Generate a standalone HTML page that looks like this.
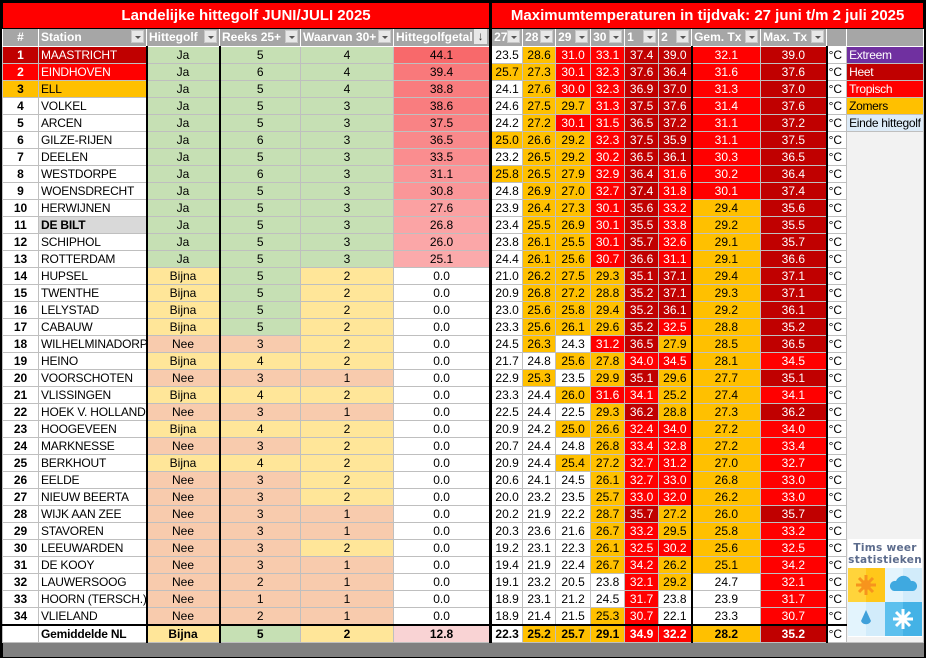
<!DOCTYPE html>
<html><head><meta charset="utf-8"><style>
html,body{margin:0;padding:0;background:#000;width:926px;height:658px;overflow:hidden}
table{position:absolute;left:2px;top:2px;width:921px;border-collapse:collapse;table-layout:fixed;font-family:"Liberation Sans",Arial,sans-serif;font-size:12px;color:#000}
td{border:1px solid #bfbfbf;padding:0;height:16px;line-height:15px;text-align:center;white-space:nowrap;overflow:hidden;background:#fff}
tr.t td{height:25px;background:#f00;color:#fff;font-weight:bold;font-size:15px;border:1px solid #000;border-bottom:1px solid #000}
tr.h td{height:17px;background:#a6a6a6;color:#fff;font-weight:bold;text-align:left;padding-left:2px;position:relative;border-color:#fff}
tr.h td b{position:absolute;right:2px;top:1px;width:13px;height:13px;background:#e8e8e8;border:1px solid #c8c8c8;box-sizing:border-box}
tr.h td b:after{content:"";position:absolute;left:3px;top:5px;border-left:3px solid transparent;border-right:3px solid transparent;border-top:3px solid #555}
td.n{font-weight:bold}
td.s{text-align:left;padding-left:2px;border-right:2px solid #000;letter-spacing:-0.2px}
td.L{border-left:2px solid #000}
td.ja{background:#c6e0b4}td.bi{background:#ffe699}td.ne{background:#f8cbad}
td.w{background:#fff}td.o{background:#ffc000}td.r{background:#f00;color:#fff}td.d{background:#c00000;color:#fff}
td.p{border-right:3px solid #000}
td.c{text-align:left;padding-left:1px}
td.lg{text-align:left;padding-left:2px;border-left:1px solid #bfbfbf;letter-spacing:-0.3px}
tr.avg td{font-weight:bold;border-top:2px solid #000;height:16px}
tr.bar td{height:14px;background:#808080;border:none}
</style></head><body>
<table>
<colgroup><col style="width:36px"><col style="width:108px"><col style="width:73px"><col style="width:81px"><col style="width:93px"><col style="width:97px"><col style="width:32px"><col style="width:33px"><col style="width:35px"><col style="width:34px"><col style="width:34px"><col style="width:33px"><col style="width:69px"><col style="width:66px"><col style="width:20px"><col style="width:77px"></colgroup>
<tr class="t"><td colspan="6" style="border-right:3px solid #000">Landelijke hittegolf JUNI/JULI 2025</td><td colspan="10">Maximumtemperaturen in tijdvak: 27 juni t/m 2 juli 2025</td></tr>
<tr class="h"><td style="text-align:center;padding:0">#</td><td>Station<b></b></td><td>Hittegolf<b></b></td><td>Reeks 25+<b></b></td><td>Waarvan 30+<b></b></td><td style="border-right:3px solid #000">Hittegolfgetal<span style="position:absolute;right:2px;top:0;width:13px;height:15px;background:#e8e8e8;color:#333;font-weight:normal;text-align:center">&#8595;</span></td><td>27<b></b></td><td>28<b></b></td><td>29<b></b></td><td>30<b></b></td><td>1<b></b></td><td>2<b></b></td><td>Gem. Tx<b></b></td><td>Max. Tx<b></b></td><td></td><td></td></tr>
<tr><td class="n d">1</td><td class="s d">MAASTRICHT</td><td class="ja">Ja</td><td class="ja L">5</td><td class="ja">4</td><td class="p" style="background:#f8696b">44.1</td><td class="w">23.5</td><td class="o">28.6</td><td class="r">31.0</td><td class="r">33.1</td><td class="d">37.4</td><td class="d">39.0</td><td class="r L">32.1</td><td class="d">39.0</td><td class="c L">°C</td><td class="lg" style="background:#7030a0;color:#fff">Extreem</td></tr>
<tr><td class="n r">2</td><td class="s r">EINDHOVEN</td><td class="ja">Ja</td><td class="ja L">6</td><td class="ja">4</td><td class="p" style="background:#f9797b">39.4</td><td class="o">25.7</td><td class="o">27.3</td><td class="r">30.1</td><td class="r">32.3</td><td class="d">37.6</td><td class="d">36.4</td><td class="r L">31.6</td><td class="d">37.6</td><td class="c L">°C</td><td class="lg" style="background:#c00000;color:#fff">Heet</td></tr>
<tr><td class="n o">3</td><td class="s o">ELL</td><td class="ja">Ja</td><td class="ja L">5</td><td class="ja">4</td><td class="p" style="background:#f97c7e">38.8</td><td class="w">24.1</td><td class="o">27.6</td><td class="r">30.0</td><td class="r">32.3</td><td class="d">36.9</td><td class="d">37.0</td><td class="r L">31.3</td><td class="d">37.0</td><td class="c L">°C</td><td class="lg" style="background:#f00;color:#fff">Tropisch</td></tr>
<tr><td class="n">4</td><td class="s">VOLKEL</td><td class="ja">Ja</td><td class="ja L">5</td><td class="ja">3</td><td class="p" style="background:#f97d7f">38.6</td><td class="w">24.6</td><td class="o">27.5</td><td class="o">29.7</td><td class="r">31.3</td><td class="d">37.5</td><td class="d">37.6</td><td class="r L">31.4</td><td class="d">37.6</td><td class="c L">°C</td><td class="lg" style="background:#ffc000">Zomers</td></tr>
<tr><td class="n">5</td><td class="s">ARCEN</td><td class="ja">Ja</td><td class="ja L">5</td><td class="ja">3</td><td class="p" style="background:#f98385">37.5</td><td class="w">24.2</td><td class="o">27.2</td><td class="r">30.1</td><td class="r">31.5</td><td class="d">36.5</td><td class="d">37.2</td><td class="r L">31.1</td><td class="d">37.2</td><td class="c L">°C</td><td class="lg" style="background:#ddebf7">Einde hittegolf</td></tr>
<tr><td class="n">6</td><td class="s">GILZE-RIJEN</td><td class="ja">Ja</td><td class="ja L">6</td><td class="ja">3</td><td class="p" style="background:#f9898b">36.5</td><td class="o">25.0</td><td class="o">26.6</td><td class="o">29.2</td><td class="r">32.3</td><td class="d">37.5</td><td class="d">35.9</td><td class="r L">31.1</td><td class="d">37.5</td><td class="c L">°C</td><td rowspan="30" style="background:#f2f2f2;position:relative;vertical-align:top;border-left:1px solid #bfbfbf">
<div style="position:absolute;left:1px;top:407px;width:74px;height:98px;background:#fff">
<div style="font-family:'DejaVu Sans',sans-serif;font-size:10.5px;line-height:12px;color:#5b6b8c;text-align:center;font-weight:bold;letter-spacing:0.3px;margin-top:3px">Tims weer<br>statistieken</div>
<svg width="74" height="68" viewBox="0 0 74 68" style="position:absolute;left:0;top:29px">
<rect x="0" y="0" width="37" height="34" fill="#ffd43b"/><rect x="18" y="0" width="19" height="34" fill="#ffc71a"/>
<rect x="37" y="0" width="37" height="34" fill="#e3f4fd"/><rect x="55" y="0" width="19" height="34" fill="#d2ecfb"/>
<rect x="0" y="34" width="37" height="34" fill="#e3f4fd"/><rect x="18" y="34" width="19" height="34" fill="#d2ecfb"/>
<rect x="37" y="34" width="37" height="34" fill="#5cc0ee"/><rect x="55" y="34" width="19" height="34" fill="#44b2e6"/>
<g stroke="#f7941d" stroke-width="3"><line x1="18" y1="7" x2="18" y2="27"/><line x1="8" y1="17" x2="28" y2="17"/><line x1="11" y1="10" x2="25" y2="24"/><line x1="25" y1="10" x2="11" y2="24"/></g><circle cx="18" cy="17" r="5" fill="#f7941d"/>
<path d="M46 23 a5 5 0 0 1 2 -10 a8 8 0 0 1 15 0 a5 5 0 0 1 2 10 z" fill="#3fa9e0"/>
<path d="M18 42 L13 53 a5.5 5.5 0 0 0 10 0 z" fill="#3fa0da"/>
<g stroke="#fff" stroke-width="3"><line x1="55" y1="41" x2="55" y2="61"/><line x1="45" y1="51" x2="65" y2="51"/><line x1="48" y1="44" x2="62" y2="58"/><line x1="62" y1="44" x2="48" y2="58"/></g>
</svg></div></td></tr>
<tr><td class="n">7</td><td class="s">DEELEN</td><td class="ja">Ja</td><td class="ja L">5</td><td class="ja">3</td><td class="p" style="background:#fa8d8f">33.5</td><td class="w">23.2</td><td class="o">26.5</td><td class="o">29.2</td><td class="r">30.2</td><td class="d">36.5</td><td class="d">36.1</td><td class="r L">30.3</td><td class="d">36.5</td><td class="c L">°C</td></tr>
<tr><td class="n">8</td><td class="s">WESTDORPE</td><td class="ja">Ja</td><td class="ja L">6</td><td class="ja">3</td><td class="p" style="background:#fa9597">31.1</td><td class="o">25.8</td><td class="o">26.5</td><td class="o">27.9</td><td class="r">32.9</td><td class="d">36.4</td><td class="r">31.6</td><td class="r L">30.2</td><td class="d">36.4</td><td class="c L">°C</td></tr>
<tr><td class="n">9</td><td class="s">WOENSDRECHT</td><td class="ja">Ja</td><td class="ja L">5</td><td class="ja">3</td><td class="p" style="background:#fa9698">30.8</td><td class="w">24.8</td><td class="o">26.9</td><td class="o">27.0</td><td class="r">32.7</td><td class="d">37.4</td><td class="r">31.8</td><td class="r L">30.1</td><td class="d">37.4</td><td class="c L">°C</td></tr>
<tr><td class="n">10</td><td class="s">HERWIJNEN</td><td class="ja">Ja</td><td class="ja L">5</td><td class="ja">3</td><td class="p" style="background:#fba1a2">27.6</td><td class="w">23.9</td><td class="o">26.4</td><td class="o">27.3</td><td class="r">30.1</td><td class="d">35.6</td><td class="r">33.2</td><td class="o L">29.4</td><td class="d">35.6</td><td class="c L">°C</td></tr>
<tr><td class="n">11</td><td class="s" style="background:#d9d9d9;font-weight:bold">DE BILT</td><td class="ja">Ja</td><td class="ja L">5</td><td class="ja">3</td><td class="p" style="background:#fba4a5">26.8</td><td class="w">23.4</td><td class="o">25.5</td><td class="o">26.9</td><td class="r">30.1</td><td class="d">35.5</td><td class="r">33.8</td><td class="o L">29.2</td><td class="d">35.5</td><td class="c L">°C</td></tr>
<tr><td class="n">12</td><td class="s">SCHIPHOL</td><td class="ja">Ja</td><td class="ja L">5</td><td class="ja">3</td><td class="p" style="background:#fba7a8">26.0</td><td class="w">23.8</td><td class="o">26.1</td><td class="o">25.5</td><td class="r">30.1</td><td class="d">35.7</td><td class="r">32.6</td><td class="o L">29.1</td><td class="d">35.7</td><td class="c L">°C</td></tr>
<tr><td class="n">13</td><td class="s">ROTTERDAM</td><td class="ja">Ja</td><td class="ja L">5</td><td class="ja">3</td><td class="p" style="background:#fbaaab">25.1</td><td class="w">24.4</td><td class="o">26.1</td><td class="o">25.6</td><td class="r">30.7</td><td class="d">36.6</td><td class="r">31.1</td><td class="o L">29.1</td><td class="d">36.6</td><td class="c L">°C</td></tr>
<tr><td class="n">14</td><td class="s">HUPSEL</td><td class="bi">Bijna</td><td class="ja L">5</td><td class="bi">2</td><td class="p">0.0</td><td class="w">21.0</td><td class="o">26.2</td><td class="o">27.5</td><td class="o">29.3</td><td class="d">35.1</td><td class="d">37.1</td><td class="o L">29.4</td><td class="d">37.1</td><td class="c L">°C</td></tr>
<tr><td class="n">15</td><td class="s">TWENTHE</td><td class="bi">Bijna</td><td class="ja L">5</td><td class="bi">2</td><td class="p">0.0</td><td class="w">20.9</td><td class="o">26.8</td><td class="o">27.2</td><td class="o">28.8</td><td class="d">35.2</td><td class="d">37.1</td><td class="o L">29.3</td><td class="d">37.1</td><td class="c L">°C</td></tr>
<tr><td class="n">16</td><td class="s">LELYSTAD</td><td class="bi">Bijna</td><td class="ja L">5</td><td class="bi">2</td><td class="p">0.0</td><td class="w">23.0</td><td class="o">25.6</td><td class="o">25.8</td><td class="o">29.4</td><td class="d">35.2</td><td class="d">36.1</td><td class="o L">29.2</td><td class="d">36.1</td><td class="c L">°C</td></tr>
<tr><td class="n">17</td><td class="s">CABAUW</td><td class="bi">Bijna</td><td class="ja L">5</td><td class="bi">2</td><td class="p">0.0</td><td class="w">23.3</td><td class="o">25.6</td><td class="o">26.1</td><td class="o">29.6</td><td class="d">35.2</td><td class="r">32.5</td><td class="o L">28.8</td><td class="d">35.2</td><td class="c L">°C</td></tr>
<tr><td class="n">18</td><td class="s">WILHELMINADORP</td><td class="ne">Nee</td><td class="ne L">3</td><td class="bi">2</td><td class="p">0.0</td><td class="w">24.5</td><td class="o">26.3</td><td class="w">24.3</td><td class="r">31.2</td><td class="d">36.5</td><td class="o">27.9</td><td class="o L">28.5</td><td class="d">36.5</td><td class="c L">°C</td></tr>
<tr><td class="n">19</td><td class="s">HEINO</td><td class="bi">Bijna</td><td class="bi L">4</td><td class="bi">2</td><td class="p">0.0</td><td class="w">21.7</td><td class="w">24.8</td><td class="o">25.6</td><td class="o">27.8</td><td class="r">34.0</td><td class="r">34.5</td><td class="o L">28.1</td><td class="r">34.5</td><td class="c L">°C</td></tr>
<tr><td class="n">20</td><td class="s">VOORSCHOTEN</td><td class="ne">Nee</td><td class="ne L">3</td><td class="ne">1</td><td class="p">0.0</td><td class="w">22.9</td><td class="o">25.3</td><td class="w">23.5</td><td class="o">29.9</td><td class="d">35.1</td><td class="o">29.6</td><td class="o L">27.7</td><td class="d">35.1</td><td class="c L">°C</td></tr>
<tr><td class="n">21</td><td class="s">VLISSINGEN</td><td class="bi">Bijna</td><td class="bi L">4</td><td class="bi">2</td><td class="p">0.0</td><td class="w">23.3</td><td class="w">24.4</td><td class="o">26.0</td><td class="r">31.6</td><td class="r">34.1</td><td class="o">25.2</td><td class="o L">27.4</td><td class="r">34.1</td><td class="c L">°C</td></tr>
<tr><td class="n">22</td><td class="s">HOEK V. HOLLAND</td><td class="ne">Nee</td><td class="ne L">3</td><td class="ne">1</td><td class="p">0.0</td><td class="w">22.5</td><td class="w">24.4</td><td class="w">22.5</td><td class="o">29.3</td><td class="d">36.2</td><td class="o">28.8</td><td class="o L">27.3</td><td class="d">36.2</td><td class="c L">°C</td></tr>
<tr><td class="n">23</td><td class="s">HOOGEVEEN</td><td class="bi">Bijna</td><td class="bi L">4</td><td class="bi">2</td><td class="p">0.0</td><td class="w">20.9</td><td class="w">24.2</td><td class="o">25.0</td><td class="o">26.6</td><td class="r">32.4</td><td class="r">34.0</td><td class="o L">27.2</td><td class="r">34.0</td><td class="c L">°C</td></tr>
<tr><td class="n">24</td><td class="s">MARKNESSE</td><td class="ne">Nee</td><td class="ne L">3</td><td class="bi">2</td><td class="p">0.0</td><td class="w">20.7</td><td class="w">24.4</td><td class="w">24.8</td><td class="o">26.8</td><td class="r">33.4</td><td class="r">32.8</td><td class="o L">27.2</td><td class="r">33.4</td><td class="c L">°C</td></tr>
<tr><td class="n">25</td><td class="s">BERKHOUT</td><td class="bi">Bijna</td><td class="bi L">4</td><td class="bi">2</td><td class="p">0.0</td><td class="w">20.9</td><td class="w">24.4</td><td class="o">25.4</td><td class="o">27.2</td><td class="r">32.7</td><td class="r">31.2</td><td class="o L">27.0</td><td class="r">32.7</td><td class="c L">°C</td></tr>
<tr><td class="n">26</td><td class="s">EELDE</td><td class="ne">Nee</td><td class="ne L">3</td><td class="bi">2</td><td class="p">0.0</td><td class="w">20.6</td><td class="w">24.1</td><td class="w">24.5</td><td class="o">26.1</td><td class="r">32.7</td><td class="r">33.0</td><td class="o L">26.8</td><td class="r">33.0</td><td class="c L">°C</td></tr>
<tr><td class="n">27</td><td class="s">NIEUW BEERTA</td><td class="ne">Nee</td><td class="ne L">3</td><td class="bi">2</td><td class="p">0.0</td><td class="w">20.0</td><td class="w">23.2</td><td class="w">23.5</td><td class="o">25.7</td><td class="r">33.0</td><td class="r">32.0</td><td class="o L">26.2</td><td class="r">33.0</td><td class="c L">°C</td></tr>
<tr><td class="n">28</td><td class="s">WIJK AAN ZEE</td><td class="ne">Nee</td><td class="ne L">3</td><td class="ne">1</td><td class="p">0.0</td><td class="w">20.2</td><td class="w">21.9</td><td class="w">22.2</td><td class="o">28.7</td><td class="d">35.7</td><td class="o">27.2</td><td class="o L">26.0</td><td class="d">35.7</td><td class="c L">°C</td></tr>
<tr><td class="n">29</td><td class="s">STAVOREN</td><td class="ne">Nee</td><td class="ne L">3</td><td class="ne">1</td><td class="p">0.0</td><td class="w">20.3</td><td class="w">23.6</td><td class="w">21.6</td><td class="o">26.7</td><td class="r">33.2</td><td class="o">29.5</td><td class="o L">25.8</td><td class="r">33.2</td><td class="c L">°C</td></tr>
<tr><td class="n">30</td><td class="s">LEEUWARDEN</td><td class="ne">Nee</td><td class="ne L">3</td><td class="bi">2</td><td class="p">0.0</td><td class="w">19.2</td><td class="w">23.1</td><td class="w">22.3</td><td class="o">26.1</td><td class="r">32.5</td><td class="r">30.2</td><td class="o L">25.6</td><td class="r">32.5</td><td class="c L">°C</td></tr>
<tr><td class="n">31</td><td class="s">DE KOOY</td><td class="ne">Nee</td><td class="ne L">3</td><td class="ne">1</td><td class="p">0.0</td><td class="w">19.4</td><td class="w">21.9</td><td class="w">22.4</td><td class="o">26.7</td><td class="r">34.2</td><td class="o">26.2</td><td class="o L">25.1</td><td class="r">34.2</td><td class="c L">°C</td></tr>
<tr><td class="n">32</td><td class="s">LAUWERSOOG</td><td class="ne">Nee</td><td class="ne L">2</td><td class="ne">1</td><td class="p">0.0</td><td class="w">19.1</td><td class="w">23.2</td><td class="w">20.5</td><td class="w">23.8</td><td class="r">32.1</td><td class="o">29.2</td><td class="w L">24.7</td><td class="r">32.1</td><td class="c L">°C</td></tr>
<tr><td class="n">33</td><td class="s">HOORN (TERSCH.)</td><td class="ne">Nee</td><td class="ne L">1</td><td class="ne">1</td><td class="p">0.0</td><td class="w">18.9</td><td class="w">23.1</td><td class="w">21.2</td><td class="w">24.5</td><td class="r">31.7</td><td class="w">23.8</td><td class="w L">23.9</td><td class="r">31.7</td><td class="c L">°C</td></tr>
<tr><td class="n">34</td><td class="s">VLIELAND</td><td class="ne">Nee</td><td class="ne L">2</td><td class="ne">1</td><td class="p">0.0</td><td class="w">18.9</td><td class="w">21.4</td><td class="w">21.5</td><td class="o">25.3</td><td class="r">30.7</td><td class="w">22.1</td><td class="w L">23.3</td><td class="r">30.7</td><td class="c L">°C</td></tr>
<tr class="avg"><td></td><td class="s">Gemiddelde NL</td><td class="bi">Bijna</td><td class="ja L">5</td><td class="bi">2</td><td class="p" style="background:#f9d3d4">12.8</td><td class="w">22.3</td><td class="o">25.2</td><td class="o">25.7</td><td class="o">29.1</td><td class="r">34.9</td><td class="r">32.2</td><td class="o L">28.2</td><td class="d">35.2</td><td class="c L" style="font-weight:normal">°C</td></tr>
<tr class="bar"><td colspan="16"></td></tr>
</table>
</body></html>
